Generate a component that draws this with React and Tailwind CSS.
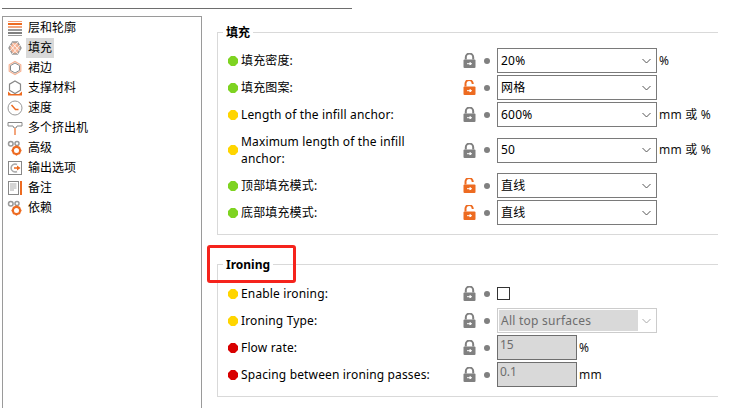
import React from "react";

const F = { fontFamily: '"Noto Sans","Noto Sans CJK SC",sans-serif' };
const OR = "#ed6b21";
const GR = "#808080";

function Lock({ open }) {
  const c = open ? OR : GR;
  return (
    <svg width="13" height="15" viewBox="0 0 13 15" className="shrink-0">
      {open ? (
        <path d="M2.5 6.5V4a3.6 3.6 0 0 1 7.2-.6v.6" fill="none" stroke={c} strokeWidth="2" />
      ) : (
        <path d="M2.8 6.5V4.200a3.700 3.700 0 0 1 7.400 0v2.300" fill="none" stroke={c} strokeWidth="2" />
      )}
      <rect x="0.5" y="6.500" width="12" height="8.500" rx="1" fill={c} />
      <path d="M4 10.700h4.500M8.500 10.700l-1.600-1.200v2.400z" stroke="#fff" strokeWidth="1" fill="#fff" />
    </svg>
  );
}

function Dot({ color }) {
  return (
    <svg width="10" height="10" viewBox="0 0 10 10" className="shrink-0">
      <path d="M3 0h4L10 3v4L7 10H3L0 7V3z" fill={color} />
    </svg>
  );
}

function Chevron({ color = "#555" }) {
  return (
    <svg width="9" height="6" viewBox="0 0 9 6" className="shrink-0">
      <path d="M.5 1l4 4 4-4" fill="none" stroke={color} strokeWidth="1" />
    </svg>
  );
}

function Select({ value }) {
  return (
    <div className="flex items-center justify-between w-[160px] h-[25px] border border-[#7a7a7a] bg-white pl-[3px] pr-[5px] text-[12px] tracking-[0.2px] text-black">
      <span>{value}</span>
      <Chevron />
    </div>
  );
}

function DisabledSelect({ value }) {
  return (
    <div className="flex items-center justify-between w-[160px] h-[25px] border border-[#cccccc] bg-white p-[1px] pr-[5px] text-[12px] tracking-[0.25px]">
      <span className="flex items-center w-[139px] h-[21px] bg-[#d9d9d9] pl-[2px] text-[#6d6d6d]">{value}</span>
      <Chevron color="#aaa" />
    </div>
  );
}

function NumInput({ value }) {
  return (
    <div className="flex items-start w-[80px] h-[25px] border border-[#6e6e6e] bg-[#d9d9d9] pl-[2px] text-[12px] leading-[18px] text-[#6d6d6d]">
      {value}
    </div>
  );
}

function Row({ dot, label, open, control, unit, h = "h-[27px]" }) {
  return (
    <div className={`flex items-center ${h}`}>
      <div className="flex items-center w-[245px] shrink-0 pl-[10px]">
        <span className="w-[13px] flex shrink-0"><Dot color={dot} /></span>
        <span className="w-[196px] text-[12px] leading-[17px] tracking-[0.15px] text-black">{label}</span>
      </div>
      <Lock open={open} />
      <span className="w-[6px] h-[6px] rounded-full bg-[#808080] ml-[8px] mr-[7px] shrink-0" />
      {control}
      {unit && <span className="ml-[2px] text-[12px] tracking-[0.2px] text-[#111]">{unit}</span>}
    </div>
  );
}

const G = "#7ed321";
const Y = "#ffd500";
const R = "#d80000";

function Ic({ children }) {
  return (
    <svg width="16" height="16" viewBox="0 0 16 16" className="shrink-0">
      {children}
    </svg>
  );
}

const icons = {
  layers: (
    <Ic>
      <rect x="1" y="1" width="14" height="1" fill="#f5a27a" />
      <rect x="1" y="3" width="14" height="2" fill={OR} />
      <rect x="1" y="6" width="14" height="2" fill="#f3a57c" />
      <rect x="1" y="9" width="14" height="2" fill="#9a9a9a" />
      <rect x="1" y="12" width="14" height="2" fill="#808080" />
      <rect x="1" y="15" width="14" height="1" fill="#9a9a9a" />
    </Ic>
  ),
  infill: (
    <Ic>
      <path d="M5.500 2h5L14 8l-3.500 6h-5L2 8z" fill="#f6b293" stroke="#999" strokeWidth="1.400" />
      <path d="M3 5l8 9M5 2.500l8 9M3 11l8-9M5 14l8-9" stroke="#fff" strokeWidth=".8" />
    </Ic>
  ),
  skirt: (
    <Ic>
      <path d="M8 1.500l5.800 3.300v6.400L8 14.500l-5.800-3.300V4.800z" fill="#fff" stroke="#f6b293" strokeWidth="1.200" />
      <path d="M8 3l4.500 2.600v4.800L8 13l-4.500-2.600V5.600z" fill="none" stroke="#888" strokeWidth="1" />
    </Ic>
  ),
  support: (
    <Ic>
      <path d="M8 1l5.500 3.200v6L8 13.500l-5.500-3.300v-6z" fill="#fff" stroke="#888" strokeWidth="1.200" />
      <path d="M1 15.500V11.500L4 14H12L15 11.500V15.500z" fill={OR} />
    </Ic>
  ),
  speed: (
    <Ic>
      <circle cx="8" cy="8" r="7" fill="#fff" stroke="#999" strokeWidth="1" />
      <path d="M4.500 5L8.500 9.500h3" fill="none" stroke={OR} strokeWidth="1.500" />
    </Ic>
  ),
  extruder: (
    <Ic>
      <path d="M1 2.500h14v3.500h-5l-1 2H7l-1-2H1z" fill="#fff" stroke="#888" strokeWidth="1" />
      <rect x="7" y="8" width="2" height="7" fill="#f3a57c" />
    </Ic>
  ),
  gears: (
    <Ic>
      <circle cx="3.800" cy="3.800" r="2.300" fill="none" stroke="#999" strokeWidth="1.500" />
      <circle cx="10" cy="3.500" r="2" fill="none" stroke="#999" strokeWidth="1.500" />
      <circle cx="9.500" cy="10.500" r="3.600" fill="none" stroke={OR} strokeWidth="2.200" />
      <path d="M9.500 5.500v1.500M9.500 14v1.500M4.500 10.500h1.500M13 10.500h1.500M6 7l1 1M12 13l1 1M13 7l-1 1M6 14l1-1" stroke={OR} strokeWidth="1.400" />
    </Ic>
  ),
  output: (
    <Ic>
      <rect x="1.500" y="1.500" width="13" height="13" fill="#fff" stroke="#888" strokeWidth="1" />
      <path d="M10 4.500A4 4 0 1 0 10 11.500" fill="none" stroke="#aaa" strokeWidth="1.500" />
      <path d="M7 8h4" stroke={OR} strokeWidth="1.500" />
      <path d="M10 5.500L13.500 8 10 10.500z" fill={OR} />
    </Ic>
  ),
  notes: (
    <Ic>
      <rect x="1.500" y="1.500" width="10" height="13" fill="#fff" stroke="#888" strokeWidth="1" />
      <path d="M3 4h6.500M3 6h6.500M3 8h6.500M3 10h4" stroke="#aaa" strokeWidth="1" />
      <rect x="13" y="1" width="2" height="14" fill={OR} />
    </Ic>
  ),
};

const tree = [
  ["layers", "层和轮廓"],
  ["infill", "填充", true],
  ["skirt", "裙边"],
  ["support", "支撑材料"],
  ["speed", "速度"],
  ["extruder", "多个挤出机"],
  ["gears", "高级"],
  ["output", "输出选项"],
  ["notes", "备注"],
  ["gears", "依赖"],
];

export default function App() {
  return (
    <div className="w-[738px] h-[408px] overflow-hidden bg-white relative" style={F}>
      <div className="ml-[2px] mt-[8px] w-[350px] h-[1px] bg-[#6e6e6e]" />
      <div className="flex mt-[7px] ml-[2px]">
        <div className="w-[200px] h-[400px] shrink-0 border border-[#9a9a9a] pt-[1px] pl-[4px]">
          {tree.map(([ic, t, sel]) => (
            <div key={t} className="flex items-center h-[20px]">
              {icons[ic]}
              <span className={`ml-[3px] px-[2px] h-[20px] leading-[20px] text-[12px] text-black ${sel ? "bg-[#d9d9d9]" : ""}`}>{t}</span>
            </div>
          ))}
        </div>
        <div className="ml-[15px] w-[501px] shrink-0">
          <fieldset className="border-l border-t border-b border-[#d9d9d9] h-[211px] pl-0 mt-[8px]">
            <legend className="ml-[5px] px-[3px] text-[12px] leading-[17px] font-bold text-black">填充</legend>
            <div className="pt-[6px]">
              <Row dot={G} label="填充密度:" control={<Select value="20%" />} unit="%" />
              <Row dot={G} label="填充图案:" open control={<Select value="网格" />} />
              <Row dot={Y} label="Length of the infill anchor:" control={<Select value="600%" />} unit="mm 或 %" />
              <Row dot={Y} h="h-[44px]" label="Maximum length of the infill anchor:" control={<Select value="50" />} unit="mm 或 %" />
              <Row dot={G} label="顶部填充模式:" open control={<Select value="直线" />} />
              <Row dot={G} label="底部填充模式:" open control={<Select value="直线" />} />
            </div>
          </fieldset>
          <fieldset className="border-l border-t border-b border-[#d9d9d9] h-[141px] mt-[21px] pl-0">
            <legend className="ml-[5px] px-[3px] text-[12px] leading-[17px] font-bold text-black">Ironing</legend>
            <div className="pt-[7px]">
              <Row dot={Y} label="Enable ironing:" control={<span className="block w-[13px] h-[13px] border border-[#333] bg-white" />} />
              <Row dot={Y} label="Ironing Type:" control={<DisabledSelect value="All top surfaces" />} />
              <Row dot={R} label="Flow rate:" control={<NumInput value="15" />} unit="%" />
              <Row dot={R} label="Spacing between ironing passes:" control={<NumInput value="0.1" />} unit="mm" />
            </div>
          </fieldset>
        </div>
      </div>
      <div className="absolute left-[207px] top-[245px] w-[89px] h-[38px] border-[3px] border-[#f5231c] rounded-[3px]" />
    </div>
  );
}
